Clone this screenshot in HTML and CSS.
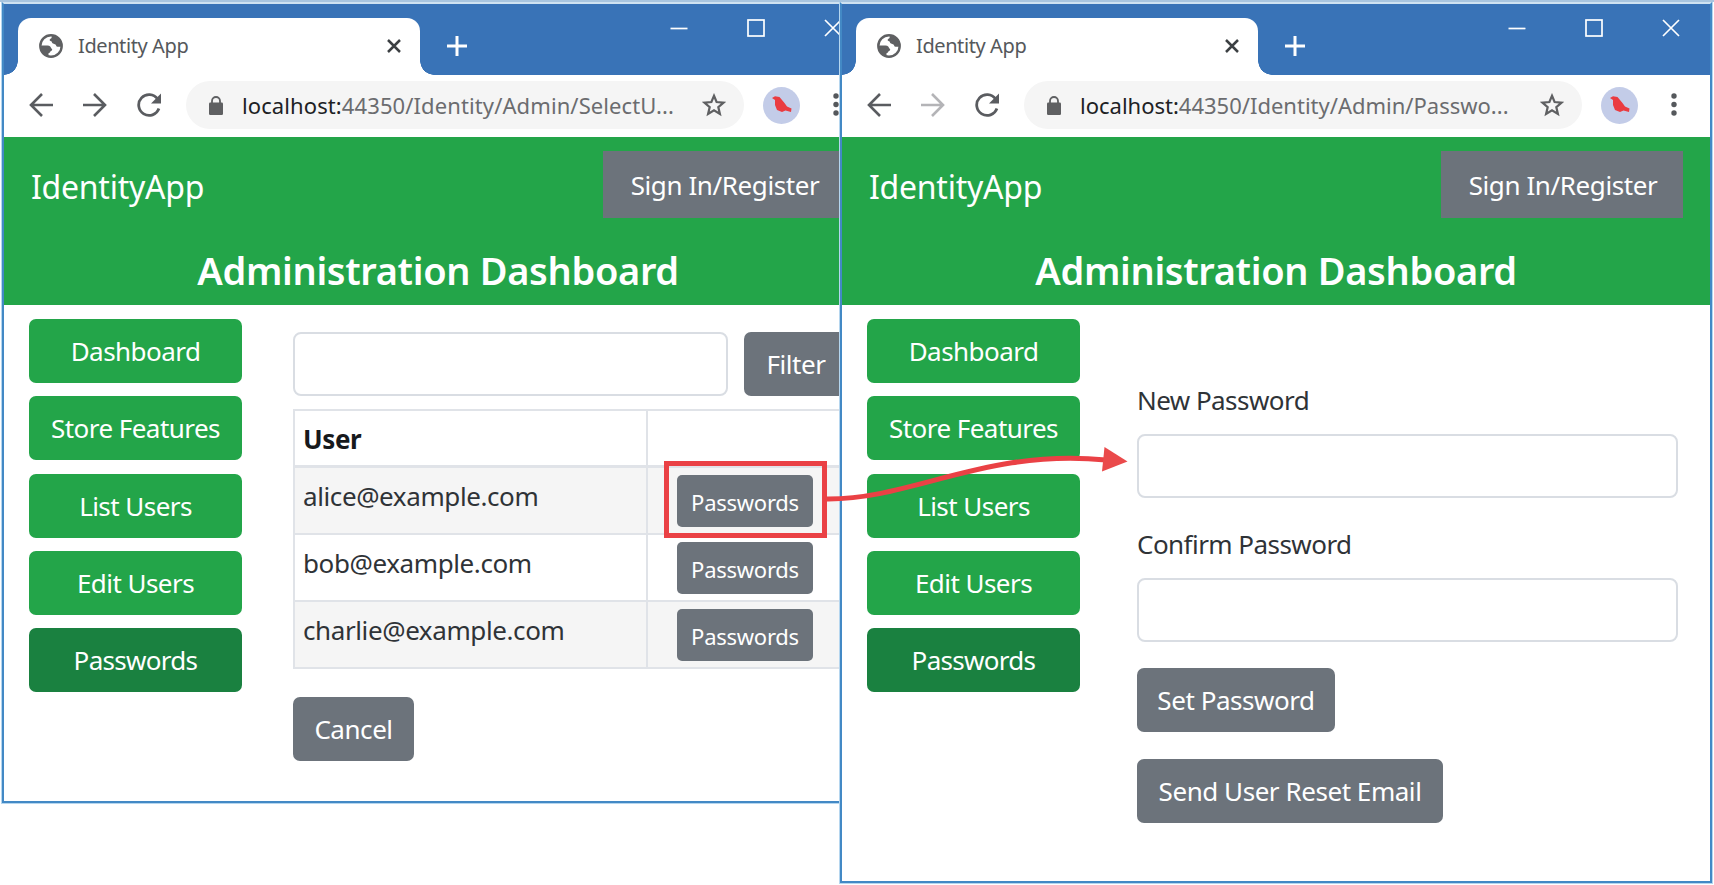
FILE: index.html
```html
<!DOCTYPE html>
<html lang="en">
<head>
<meta charset="utf-8">
<title>Identity App</title>
<link rel="stylesheet" href="styles.css">
</head>
<body>
<svg class="defs" width="0" height="0" aria-hidden="true">
  <symbol id="globe" viewBox="0 0 24 24"><circle cx="12" cy="12" r="10.700" fill="#fff" stroke="#5f6062" stroke-width="2.400"/><path d="M13 1.500C12.500 3 13 4 11.500 4.800C10 5.500 10.500 7 12 7.200C13.300 7.400 12.500 9 14 9.500L16.500 10.500C17.500 11.500 17 12.500 18.500 12.800C20 13 21 12.500 22.500 13A11 11 0 0 0 13 1.500Z" fill="#5f6062"/><path d="M1.500 11.500H8.500C11 11.500 12 13 12 14.200C13.700 14.500 13.500 16.500 12 17C10.800 17.300 11.500 19 9.500 19.300V22C5 21 1.500 17 1.500 11.500Z" fill="#5f6062"/></symbol>
  <symbol id="close" viewBox="0 0 14 14"><path d="M1 1L13 13M13 1L1 13" fill="none" stroke="#3c4043" stroke-width="2.500"/></symbol>
  <symbol id="plus" viewBox="0 0 20 20"><path d="M10 0V20M0 10H20" fill="none" stroke="#fff" stroke-width="3"/></symbol>
  <symbol id="min" viewBox="0 0 18 18"><path d="M.5 9.500H17.500" fill="none" stroke="#fff" stroke-width="1.700"/></symbol>
  <symbol id="max" viewBox="0 0 18 18"><rect x="1" y="1" width="16" height="16" fill="none" stroke="#fff" stroke-width="1.700"/></symbol>
  <symbol id="exit" viewBox="0 0 18 18"><path d="M1 1L17 17M17 1L1 17" fill="none" stroke="#fff" stroke-width="1.700"/></symbol>
  <symbol id="arrow" viewBox="0 0 24 24"><path d="M24 12H2M13 1L2 12L13 23" fill="none" stroke="currentColor" stroke-width="2.600"/></symbol>
  <symbol id="reload" viewBox="0 0 24 24"><path d="M20.600 6A10.400 10.400 0 1 0 21.900 15.500" fill="none" stroke="currentColor" stroke-width="2.800"/><path d="M24 .5V10.500H14Z" fill="currentColor"/></symbol>
  <symbol id="lock" viewBox="0 0 14 19"><rect x="0" y="6.500" width="14" height="12.500" rx="1.200" fill="#5f6062"/><path d="M3 7.500V5A4 4 0 0 1 11 5V7.500" fill="none" stroke="#5f6062" stroke-width="1.800"/></symbol>
  <symbol id="star" viewBox="0 0 24 24"><path d="M12 2.800L14.600 9L21.600 9.600L16.300 14.100L17.900 21L12 17.300L6.100 21L7.700 14.100L2.400 9.600L9.400 9Z" fill="none" stroke="#5f6062" stroke-width="2.200"/></symbol>
  <symbol id="bird" viewBox="0 0 37 37"><circle cx="18.500" cy="18.500" r="18.500" fill="#c3cce8"/><path d="M9 11L12 9.300L16.500 10L21.500 16L24 19.500L28.500 21.500L28 25L22.500 23.500L19 25L14 23L12 18V13Z" fill="#ea3b40"/></symbol>
  <symbol id="dots" viewBox="0 0 6 24"><g fill="#55585c"><circle cx="3" cy="3" r="2.700"/><circle cx="3" cy="11.500" r="2.700"/><circle cx="3" cy="20" r="2.700"/></g></symbol>
</svg>

<main class="desktop">
  <section class="window window-users">
    <header class="titlebar">
      <div class="tab"><svg class="i-globe"><use href="#globe"/></svg><span class="tab-title">Identity App</span><svg class="i-close"><use href="#close"/></svg></div>
      <svg class="i-plus"><use href="#plus"/></svg>
      <div class="controls"><svg><use href="#min"/></svg><svg><use href="#max"/></svg><svg><use href="#exit"/></svg></div>
    </header>
    <div class="toolbar">
      <svg class="i-nav"><use href="#arrow"/></svg>
      <svg class="i-nav forward"><use href="#arrow"/></svg>
      <svg class="i-nav"><use href="#reload"/></svg>
      <div class="address"><svg class="i-lock"><use href="#lock"/></svg><span class="url wide"><b>localhost:</b>44350/Identity/Admin/SelectU...</span><svg class="i-star"><use href="#star"/></svg></div>
      <svg class="i-bird"><use href="#bird"/></svg>
      <svg class="i-dots"><use href="#dots"/></svg>
    </div>
    <div class="banner">
      <div class="navbar"><span class="brand">IdentityApp</span><a class="signin">Sign In/Register</a></div>
      <h1>Administration Dashboard</h1>
    </div>
    <div class="content">
      <nav class="menu">
        <a class="btn">Dashboard</a>
        <a class="btn">Store Features</a>
        <a class="btn">List Users</a>
        <a class="btn">Edit Users</a>
        <a class="btn active">Passwords</a>
      </nav>
      <div class="users">
        <div class="filter"><div class="input"></div><a class="btn grey">Filter</a></div>
        <div class="table">
          <div class="row head"><div class="cell">User</div><div class="cell"></div></div>
          <div class="row odd"><div class="cell">alice@example.com</div><div class="cell action"><a class="btn grey small">Passwords</a></div></div>
          <div class="row"><div class="cell">bob@example.com</div><div class="cell action"><a class="btn grey small">Passwords</a></div></div>
          <div class="row odd"><div class="cell">charlie@example.com</div><div class="cell action"><a class="btn grey small">Passwords</a></div></div>
        </div>
        <a class="btn grey cancel">Cancel</a>
      </div>
    </div>
  </section>

  <section class="window window-password">
    <header class="titlebar">
      <div class="tab"><svg class="i-globe"><use href="#globe"/></svg><span class="tab-title">Identity App</span><svg class="i-close"><use href="#close"/></svg></div>
      <svg class="i-plus"><use href="#plus"/></svg>
      <div class="controls"><svg><use href="#min"/></svg><svg><use href="#max"/></svg><svg><use href="#exit"/></svg></div>
    </header>
    <div class="toolbar">
      <svg class="i-nav"><use href="#arrow"/></svg>
      <svg class="i-nav forward disabled"><use href="#arrow"/></svg>
      <svg class="i-nav"><use href="#reload"/></svg>
      <div class="address"><svg class="i-lock"><use href="#lock"/></svg><span class="url"><b>localhost:</b>44350/Identity/Admin/Passwo...</span><svg class="i-star"><use href="#star"/></svg></div>
      <svg class="i-bird"><use href="#bird"/></svg>
      <svg class="i-dots"><use href="#dots"/></svg>
    </div>
    <div class="banner">
      <div class="navbar"><span class="brand">IdentityApp</span><a class="signin">Sign In/Register</a></div>
      <h1>Administration Dashboard</h1>
    </div>
    <div class="content">
      <nav class="menu">
        <a class="btn">Dashboard</a>
        <a class="btn">Store Features</a>
        <a class="btn">List Users</a>
        <a class="btn">Edit Users</a>
        <a class="btn active">Passwords</a>
      </nav>
      <div class="form">
        <div class="label">New Password</div>
        <div class="input"></div>
        <div class="label second">Confirm Password</div>
        <div class="input"></div>
        <a class="btn grey set">Set Password</a>
        <a class="btn grey send">Send User Reset Email</a>
      </div>
    </div>
  </section>

  <svg class="callout" viewBox="0 0 1714 885" aria-hidden="true">
    <rect x="666.500" y="463.500" width="158" height="72" fill="none" stroke="#ea4145" stroke-width="5"/>
    <path d="M826 499C912 500 985 448 1106 460" fill="none" stroke="#ea4145" stroke-width="5"/>
    <path d="M1104.500 447L1102 471.500L1127.500 461.500Z" fill="#ea4a4b"/>
  </svg>
</main>
</body>
</html>
```
FILE: styles.css
```css
* { box-sizing: border-box; }

body {
  margin: 0;
  background: #fff;
  color: #2f3337;
  font-family: "Noto Sans", "Open Sans", sans-serif;
  font-size: 26px;
  letter-spacing: -.55px;
  line-height: 40px;
  white-space: nowrap;
}

svg { display: block; flex: none; }
.defs { position: absolute; }

.desktop {
  position: relative;
  width: 1714px;
  height: 885px;
  overflow: hidden;
  border-top: 2px solid #a9c5df;
}

/* Browser windows */
.window {
  position: absolute;
  top: 0;
  width: 872px;
  border: 2px solid #4389c5;
  border-top-color: #cfe2f1;
  box-shadow: 0 0 0 1px #b5d6ef;
  background: #fff;
}
.window-users { left: 2px; height: 801px; }
.window-password { left: 840px; height: 881px; }

.titlebar {
  display: flex;
  height: 71px;
  padding: 14px 30px 0 14px;
  background: #3973b7;
}
.tab {
  position: relative;
  display: flex;
  align-items: center;
  width: 402px;
  height: 57px;
  padding: 0 19px 2px 21px;
  border-radius: 13px 13px 0 0;
  background: #fff;
}
.tab::before,
.tab::after {
  content: "";
  position: absolute;
  bottom: 0;
  width: 14px;
  height: 14px;
}
.tab::before { left: -14px; background: radial-gradient(circle at 0 0, #3973b7 13.500px, #fff 14px); }
.tab::after { right: -14px; background: radial-gradient(circle at 100% 0, #3973b7 13.500px, #fff 14px); }
.i-globe { width: 24px; height: 24px; }
.tab-title { margin-left: 15px; font-size: 20px; letter-spacing: -.4px; color: #55585c; }
.i-close { width: 14px; height: 14px; margin-left: auto; }
.i-plus { width: 20px; height: 20px; margin: 18px 0 0 27px; }
.controls { display: flex; gap: 59px; margin: 1px 0 0 auto; }
.controls svg { width: 18px; height: 18px; }

.toolbar {
  display: flex;
  align-items: center;
  height: 62px;
  padding: 0 0 2px 25px;
  color: #5a5c60;
}
.i-nav { width: 24px; height: 24px; margin-right: 30px; }
.forward { transform: scaleX(-1); }
.disabled { color: #b4b4b7; }
.address {
  display: flex;
  align-items: center;
  width: 558px;
  height: 48px;
  margin-left: -5px;
  padding: 0 18px 0 23px;
  border-radius: 24px;
  background: #f5f5f5;
}
.i-lock { width: 14px; height: 19px; }
.url { margin-left: 19px; font-size: 22px; letter-spacing: 0; color: #6b6c6f; }
.url.wide { letter-spacing: .1px; }
.url b { font-weight: 400; color: #202124; }
.i-star { width: 24px; height: 24px; margin-left: auto; }
.i-bird { width: 37px; height: 37px; margin-left: 19px; }
.i-dots { width: 6px; height: 24px; margin-left: 33px; }

/* Application header */
.banner { height: 168px; background: #23a549; color: #fff; }
.navbar {
  display: flex;
  justify-content: space-between;
  height: 85px;
  padding: 14px 27px 0 27px;
}
.brand { font-size: 32px; letter-spacing: -.25px; line-height: 71px; }
.signin {
  width: 242px;
  height: 67px;
  padding-left: 2px;
  background: #6c737b;
  letter-spacing: -.4px;
  line-height: 68px;
  text-align: center;
}
h1 {
  margin: 0;
  padding-top: 13px;
  font-size: 38px;
  font-weight: 600;
  letter-spacing: -.33px;
  line-height: 70px;
  text-align: center;
}

/* Page body */
.content { display: flex; padding: 14px 25px 0; }
.menu { display: flex; flex: none; flex-direction: column; gap: 13.300px; width: 213px; }
.btn {
  display: block;
  height: 64px;
  border-radius: 7px;
  background: #23a549;
  color: #fff;
  line-height: 64px;
  text-align: center;
}
.active { background: #1a8140; letter-spacing: -.7px; }
.grey { background: #6c737b; letter-spacing: -.45px; }
.small { width: 136px; height: 52px; border-radius: 5px; font-size: 22px; letter-spacing: -.25px; line-height: 54px; }
.input {
  height: 64px;
  border: 2px solid #d9dde3;
  border-radius: 8px;
}

.users { flex: none; width: 555px; margin-left: 51px; padding-top: 13px; }
.filter { display: flex; gap: 16px; }
.filter .input { width: 435px; }
.filter .btn { width: 104px; }
.table { margin-top: 13px; border: 2px solid #e0e3e8; }
.row { display: flex; height: 67px; border-bottom: 2px solid #e0e3e8; }
.row:last-child { height: 65px; border-bottom: 0; }
.head { height: 57px; border-bottom-width: 3px; font-weight: 700; color: #17191c; }
.odd { background: #f5f5f5; }
.cell { flex: none; width: 353px; padding: 8px 0 0 8px; border-right: 2px solid #e0e3e8; letter-spacing: -.4px; }
.cell + .cell { width: 198px; border-right: 0; }
.cell.action { padding: 7px 0 0 29px; }
.cancel { width: 121px; margin-top: 28px; }

.form { flex: none; width: 541px; padding-top: 61px; }
.form { width: 541px; margin-left: 57px; }
.label { height: 54px; }
.second { margin-top: 26px; }
.set { width: 198px; margin-top: 26px; }
.send { width: 306px; margin-top: 27px; }

.callout { position: absolute; left: 0; top: -2px; width: 1714px; height: 885px; }
```
